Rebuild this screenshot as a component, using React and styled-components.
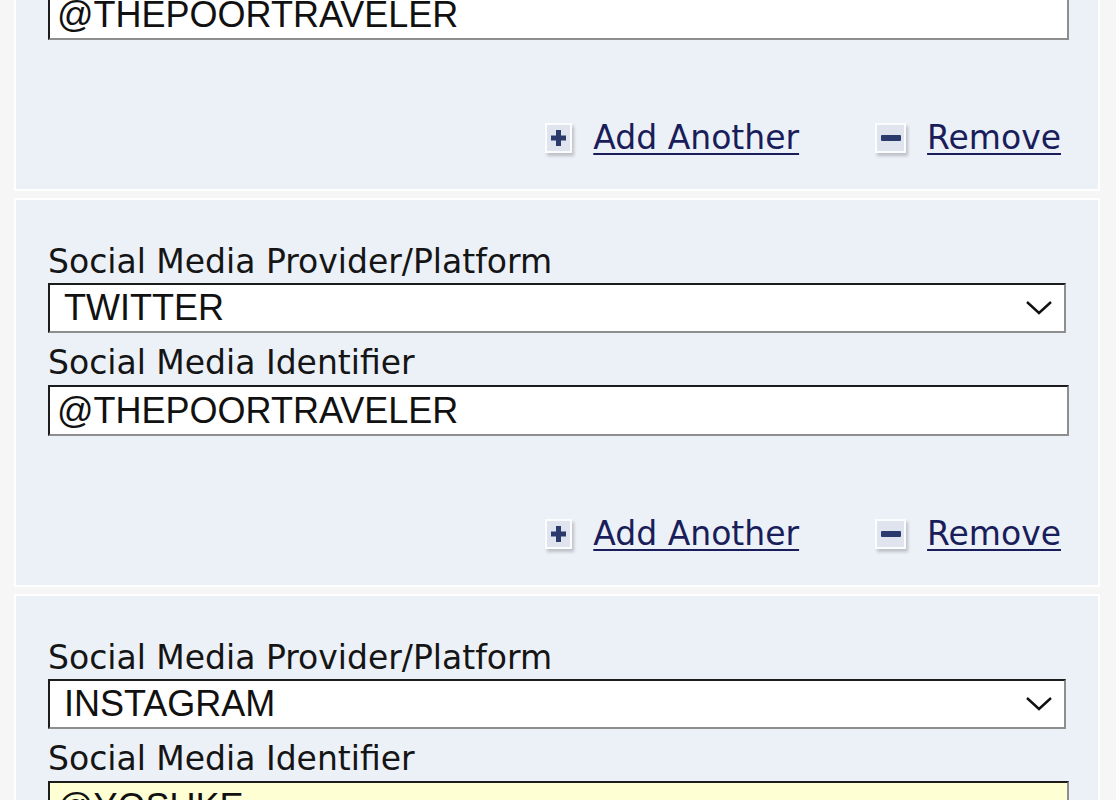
import React from "react"
import styled, { createGlobalStyle } from "styled-components"

const GlobalStyle = createGlobalStyle`
  html, body {
    margin: 0;
    padding: 0;
    background: #f6f6f6;
    overflow: hidden;
  }
`;

const accounts = [
    { provider: "TWITTER", handle: "@THEPOORTRAVELER" },
    { provider: "TWITTER", handle: "@THEPOORTRAVELER" },
    { provider: "INSTAGRAM", handle: "@YOSUKE", highlight: true },
];

const SocialMediaList = () => {
    return (
        <Page>
            {accounts.map((account, index) =>
                <Panel key={index}>
                    <Label>Social Media Provider/Platform</Label>
                    <SelectBox>
                        <span>{account.provider}</span>
                        <svg width="28" height="16" viewBox="0 0 28 16">
                            <path d="M2 2 L14 13 L26 2" fill="none" stroke="#111" strokeWidth="2.4" />
                        </svg>
                    </SelectBox>
                    <Label gap="11px">Social Media Identifier</Label>
                    <TextInput type="text" value={account.handle} readOnly highlight={account.highlight} />
                    <Actions>
                        <Action>
                            <IconButton>
                                <svg width="15" height="16" viewBox="0 0 15 16">
                                    <rect x="5" y="0" width="5" height="16" fill="#2b3a6c" />
                                    <rect x="0" y="5.5" width="15" height="5" fill="#2b3a6c" />
                                </svg>
                            </IconButton>
                            <Link href="#">Add Another</Link>
                        </Action>
                        <Action>
                            <IconButton wide>
                                <svg width="20" height="6" viewBox="0 0 20 6">
                                    <rect x="0" y="0" width="20" height="6" rx="1" fill="#2b3a6c" />
                                </svg>
                            </IconButton>
                            <Link href="#">Remove</Link>
                        </Action>
                    </Actions>
                </Panel>)
            }
        </Page>
    )
}

// page is scrolled: first panel starts above the window
const Page = styled.div`
    margin-top: -198px;
    padding: 0 16px 0 14px;
`;

const Panel = styled.section`
    display: flex;
    flex-direction: column;
    align-items: flex-start;
    background: #ecf0f7;
    border: 2px solid #ffffff;
    padding: 43px 0 31px 32px;
    margin-bottom: 7px;
`;

const Label = styled.label`
    font-family: "DejaVu Sans", Verdana, sans-serif;
    font-size: 33px;
    line-height: 38px;
    color: #151515;
    margin-top: ${props => props.gap || "0"};
    margin-bottom: 2px;
`;

const SelectBox = styled.div`
    box-sizing: border-box;
    width: 1018px;
    height: 50px;
    display: flex;
    align-items: center;
    justify-content: space-between;
    padding: 0 11px 0 14px;
    background: #ffffff;
    border-style: solid;
    border-width: 2px;
    border-color: #1c1c1c #8e8e8e #8e8e8e #1c1c1c;
    font-family: "Liberation Sans", Arial, sans-serif;
    font-size: 36px;
    color: #111;
`;

const TextInput = styled.input`
    box-sizing: border-box;
    width: 1021px;
    height: 51px;
    margin: 1px 0 0;
    padding: 0 7px;
    background: ${props => props.highlight ? "#ffffd4" : "#ffffff"};
    border-style: solid;
    border-width: 2px;
    border-color: #1c1c1c #8e8e8e #8e8e8e #1c1c1c;
    font-family: "Liberation Sans", Arial, sans-serif;
    font-size: 36px;
    color: #111;
    outline: none;
`;

const Actions = styled.div`
    align-self: stretch;
    display: flex;
    justify-content: flex-end;
    align-items: center;
    gap: 76px;
    height: 40px;
    margin-top: 78px;
    padding-right: 37px;
`;

const Action = styled.div`
    display: flex;
    align-items: center;
    gap: 21px;
`;

const IconButton = styled.span`
    box-sizing: border-box;
    display: flex;
    align-items: center;
    justify-content: center;
    width: ${props => props.wide ? "31px" : "27px"};
    height: 30px;
    background: #dfe4ee;
    border: 2px solid #fbfcfe;
    box-shadow: 2px 3px 3px rgba(0, 0, 0, 0.2);
`;

const Link = styled.a`
    font-family: "DejaVu Sans", Verdana, sans-serif;
    font-size: 33px;
    line-height: 40px;
    color: #191e5a;
    text-decoration: underline;
    text-decoration-thickness: 2px;
    text-underline-offset: 4px;
`;

const App = () => (
    <>
        <GlobalStyle />
        <SocialMediaList />
    </>
);

export default App;
